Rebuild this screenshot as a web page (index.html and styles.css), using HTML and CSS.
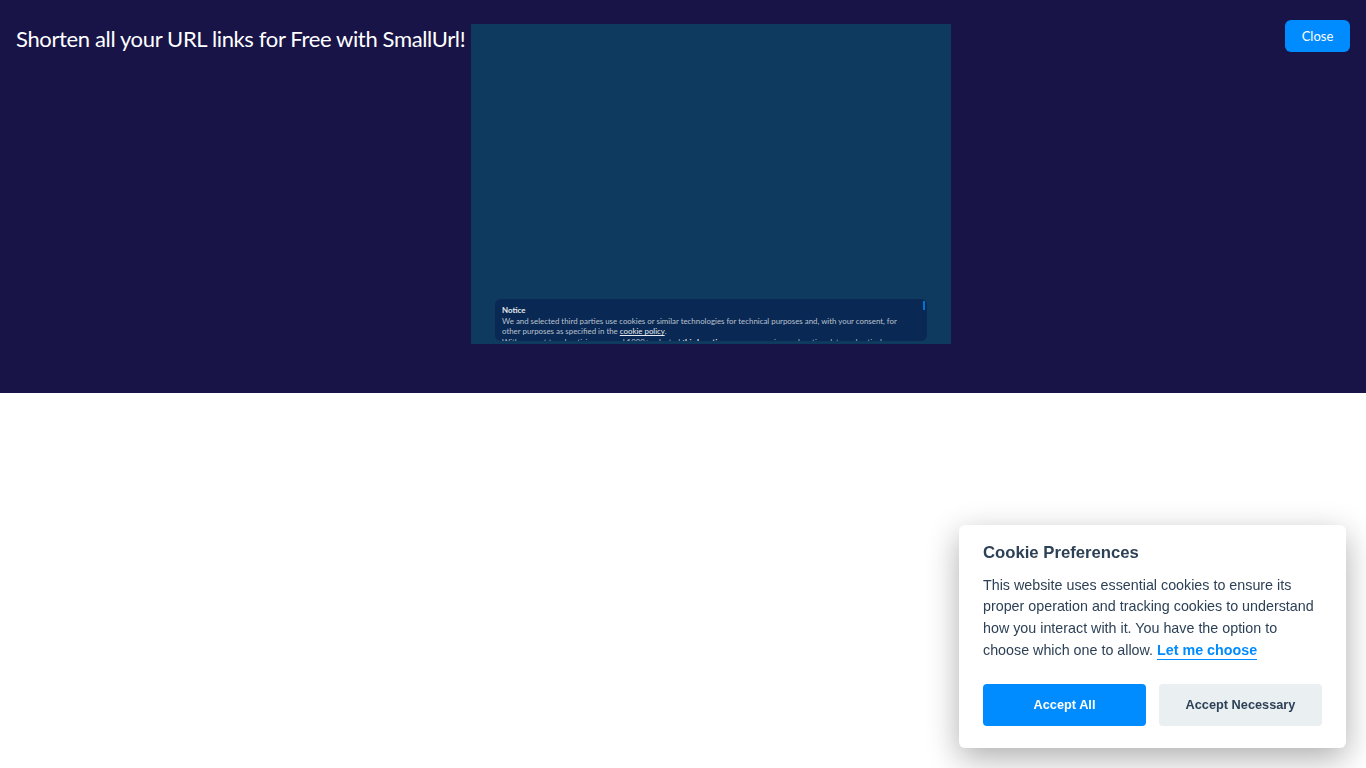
FILE: index.html
```html
<!DOCTYPE html>
<html lang="en">
<head>
    <meta charset="UTF-8">
    <title>SmallUrl</title>
    <link rel="stylesheet" href="styles.css">
</head>
<body>
<div class="promo">
    <h2 class="promo-title">Shorten all your URL links for Free with SmallUrl!</h2>
    <div class="frame">
        <div class="notice">
            <div class="notice-text">
                <b>Notice</b><br>
                We and selected third parties use cookies or similar technologies for technical purposes and, with your consent, for other purposes as specified in the <a href="javascript:;">cookie policy</a>.<br>
                With respect to advertising, we and 1000+ selected <b>third parties</b>, may use precise geolocation data and actively scan device
            </div>
            <span class="notice-bar"></span>
        </div>
    </div>
    <a class="close" href="javascript:;">Close</a>
</div>
<div class="cookie">
    <h3 class="cookie-title">Cookie Preferences</h3>
    <p class="cookie-text">This website uses essential cookies to ensure its proper operation and tracking cookies to understand how you interact with it. You have the option to choose which one to allow. <a href="javascript:;">Let me choose</a></p>
    <div class="cookie-btns">
        <a class="btn btn-primary" href="javascript:;">Accept All</a>
        <a class="btn btn-second" href="javascript:;">Accept Necessary</a>
    </div>
</div>
</body>
</html>
```
FILE: styles.css
```css
*{
    padding:0px;
    margin:0px;
    box-sizing:border-box;
}
body{
    background:#fff;
    font-family:"Liberation Sans",sans-serif;
}
a{
    text-decoration:none;
}
.promo{
    display:flex;
    height:393px;
    padding:0px 16px;
    background:#181447;
    font-family:Lato,sans-serif;
}
.promo-title{
    width:455px;
    padding-top:24px;
    font-size:22px;
    line-height:30px;
    font-weight:400;
    letter-spacing:-0.36px;
    color:#fff;
    white-space:nowrap;
}
.frame{
    display:flex;
    flex-direction:column;
    justify-content:flex-end;
    width:480px;
    height:320px;
    margin-top:24px;
    padding:0px 24px 3px;
    background:#0e3a5f;
}
.notice{
    position:relative;
    height:42px;
    padding:6px 24px 0px 7px;
    overflow:hidden;
    border-radius:6px;
    background:#092853;
    font-size:7.88px;
    line-height:10.7px;
    color:#b9c2cf;
}
.notice b{
    color:#e6eaef;
}
.notice a{
    color:#e6eaef;
    text-decoration:underline;
}
.notice-bar{
    position:absolute;
    top:2px;
    right:2px;
    width:2px;
    height:9px;
    background:#0073ce;
}
.close{
    display:block;
    width:65px;
    height:32px;
    margin:20px 0px 0px auto;
    border-radius:6px;
    background:#008cff;
    color:#fff;
    font-size:13px;
    line-height:32px;
    text-align:center;
}
.cookie{
    position:fixed;
    right:20px;
    bottom:20px;
    width:387px;
    height:223px;
    padding:18px 24px 0px;
    border-radius:6px;
    background:#fff;
    box-shadow:0 10px 32px rgba(0,0,0,0.32);
    color:#2d4156;
}
.cookie-title{
    font-size:16.7px;
    line-height:20px;
    font-weight:700;
}
.cookie-text{
    height:88px;
    margin-top:11.6px;
    font-size:14.3px;
    line-height:21.75px;
}
.cookie-text a{
    padding-bottom:1px;
    color:#008cff;
    font-weight:700;
    border-bottom:1px solid #008cff;
}
.cookie-btns{
    display:flex;
    gap:13px;
    margin-top:21.4px;
}
.btn{
    flex:1;
    height:42px;
    border-radius:4px;
    font-size:12.75px;
    line-height:42px;
    font-weight:700;
    text-align:center;
}
.btn-primary{
    background:#008cff;
    color:#fff;
}
.btn-second{
    background:#eaeff2;
    color:#2d4156;
}
```
